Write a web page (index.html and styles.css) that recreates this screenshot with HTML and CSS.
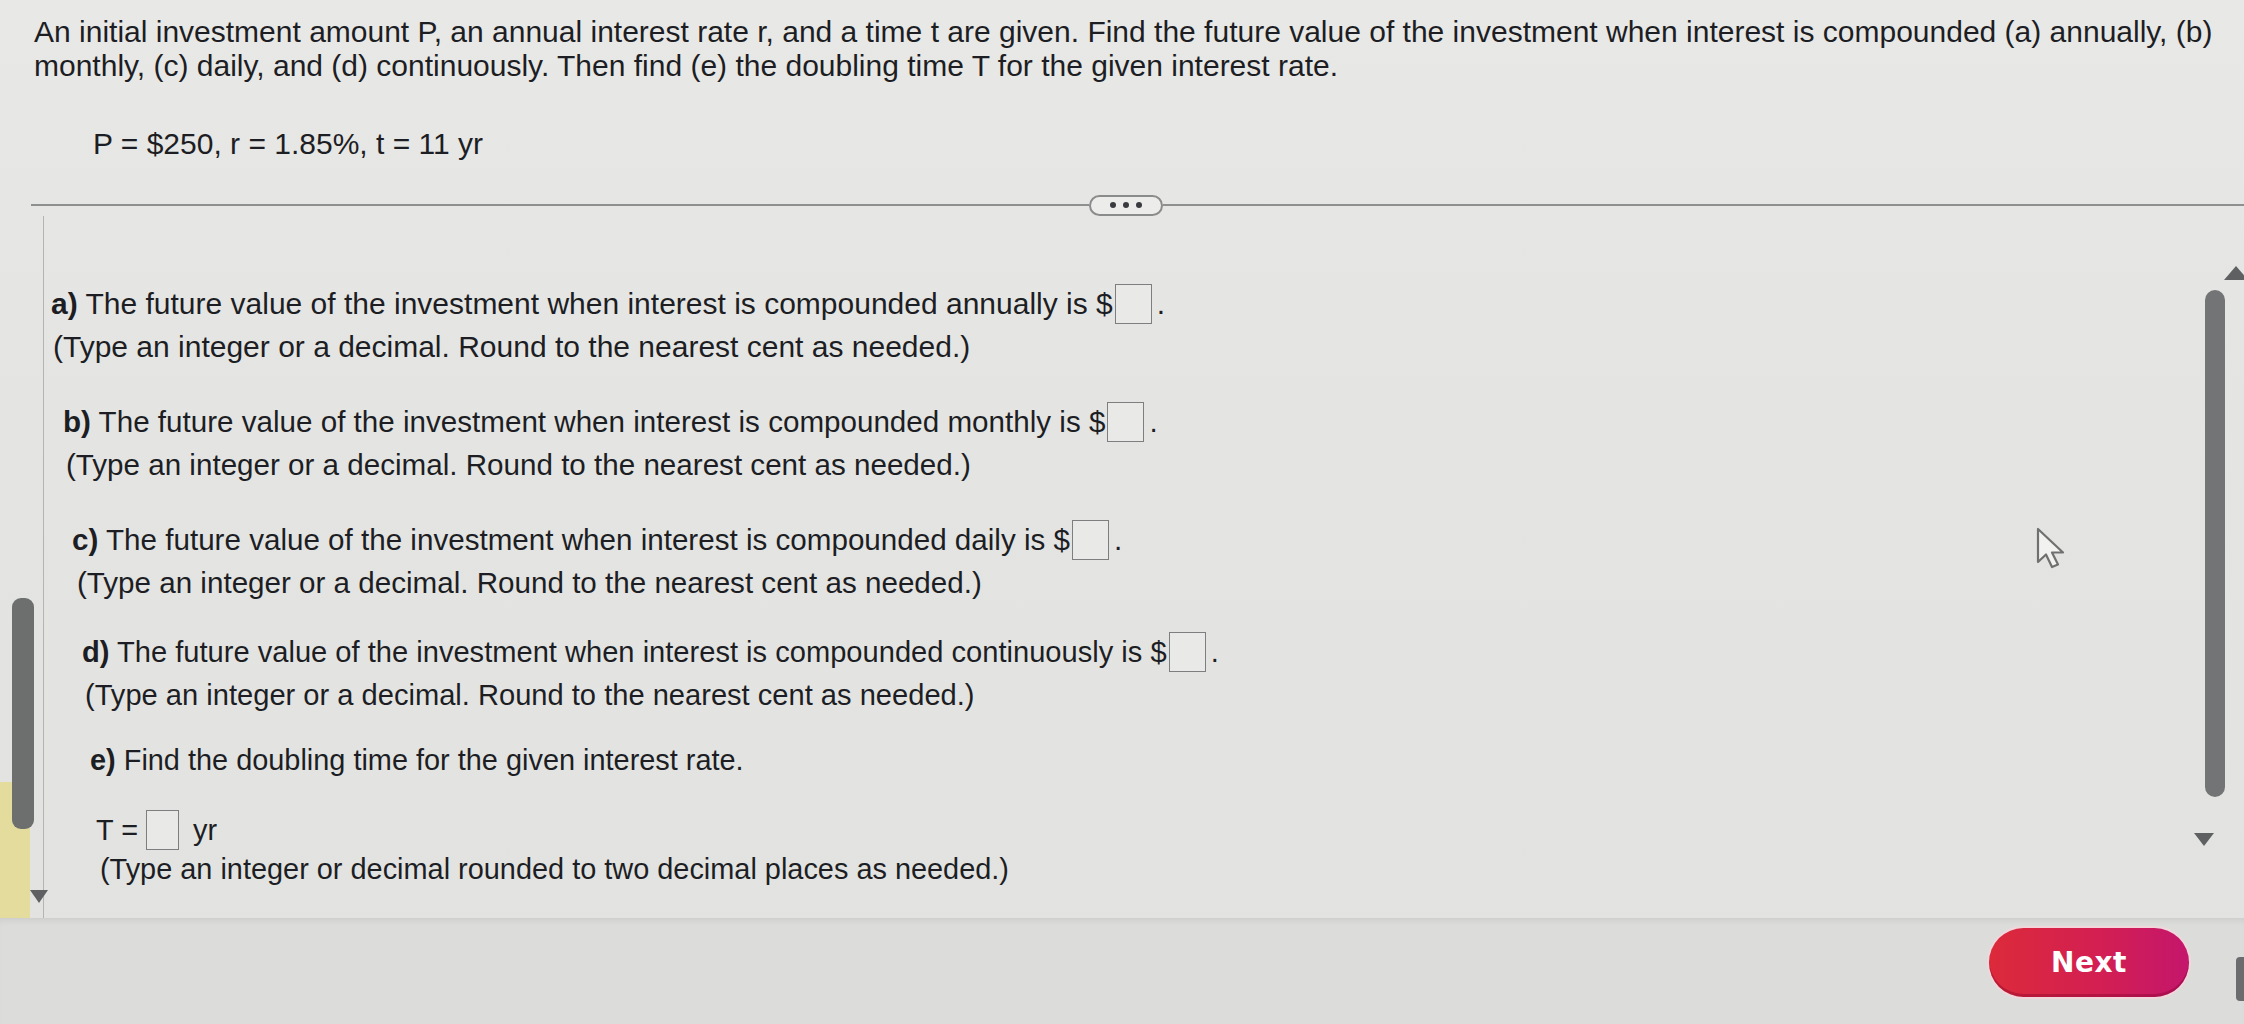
FILE: index.html
```html
<!DOCTYPE html>
<html lang="en">
<head>
<meta charset="utf-8">
<title>Compound interest</title>
<link rel="stylesheet" href="styles.css">
</head>
<body>
<div class="page">
  <header class="prompt">
    <p class="intro">An initial investment amount P, an annual interest rate r, and a time t are given. Find the future value of the investment when interest is compounded (a) annually, (b)<br>monthly, (c) daily, and (d) continuously. Then find (e) the doubling time T for the given interest rate.</p>
    <p class="given">P = $250, r = 1.85%, t = 11 yr</p>
  </header>

  <div class="divider">
    <span class="rule rule-left"></span>
    <button class="more" type="button" aria-label="More"><span class="dot"></span><span class="dot"></span><span class="dot"></span></button>
    <span class="rule rule-right"></span>
  </div>

  <div class="workarea">
    <aside class="side-pane">
      <span class="side-thumb"></span>
      <span class="side-note"></span>
      <span class="side-arrow"></span>
    </aside>

    <section class="questions">
      <div class="q q-a">
        <p class="line"><b>a)</b> The future value of the investment when interest is compounded annually is $<span class="answer"></span><span class="period">.</span></p>
        <p class="line hint hint-a">(Type an integer or a decimal. Round to the nearest cent as needed.)</p>
      </div>
      <div class="q q-b">
        <p class="line"><b>b)</b> The future value of the investment when interest is compounded monthly is $<span class="answer"></span><span class="period">.</span></p>
        <p class="line hint">(Type an integer or a decimal. Round to the nearest cent as needed.)</p>
      </div>
      <div class="q q-c">
        <p class="line"><b>c)</b> The future value of the investment when interest is compounded daily is $<span class="answer"></span><span class="period">.</span></p>
        <p class="line hint hint-c">(Type an integer or a decimal. Round to the nearest cent as needed.)</p>
      </div>
      <div class="q q-d">
        <p class="line"><b>d)</b> The future value of the investment when interest is compounded continuously is $<span class="answer"></span><span class="period">.</span></p>
        <p class="line hint">(Type an integer or a decimal. Round to the nearest cent as needed.)</p>
      </div>
      <div class="q q-e">
        <p class="line"><b>e)</b> Find the doubling time for the given interest rate.</p>
        <p class="line t-row">T =<span class="answer answer-t"></span><span class="unit">yr</span></p>
        <p class="line t-hint">(Type an integer or decimal rounded to two decimal places as needed.)</p>
      </div>
    </section>

    <div class="vscroll">
      <span class="arrow-up"></span>
      <span class="vthumb"></span>
      <span class="arrow-down"></span>
    </div>
  </div>

  <footer class="footer">
    <button class="next" type="button">Next</button>
    <span class="edge-bar"></span>
  </footer>

  <svg class="cursor" width="34" height="44" viewBox="0 0 34 44" aria-hidden="true">
    <path d="M2 2 L2 35 L10 27.5 L16 40 L22 37.5 L16 25.5 L27 25.5 Z" fill="#f2f2f0" stroke="#6f7170" stroke-width="2.2" stroke-linejoin="round"/>
  </svg>
</div>
</body>
</html>
```

FILE: styles.css
```css
* { box-sizing: border-box; }

body {
  margin: 0;
  background: #e4e5e3;
  font-family: "Liberation Sans", Arial, sans-serif;
  color: #1d1e24;
}

.page {
  position: relative;
  width: 2244px;
  height: 1024px;
  display: flex;
  flex-direction: column;
  overflow: hidden;
  background: linear-gradient(180deg, #e8e8e6 0%, #e4e5e3 40%, #e2e3e1 100%);
}

/* ---------- prompt ---------- */
.prompt {
  padding: 15px 0 0 34px;
  font-size: 30px;
}

.intro {
  margin: 0;
  line-height: 34px;
  white-space: nowrap;
}

.given {
  margin: 44px 0 0 59px;
  line-height: 34px;
}

/* ---------- divider ---------- */
.divider {
  margin-top: 33px;
  height: 22px;
  display: flex;
  align-items: center;
  padding-left: 31px;
}

.rule {
  height: 2px;
  background: #8e908f;
}

.rule-left { width: 1058px; flex: none; }
.rule-right { flex: 1; }

.more {
  flex: none;
  width: 74px;
  height: 21px;
  padding: 0;
  border: 2px solid #8a8c8b;
  border-radius: 11px;
  background: #ecedeb;
  display: flex;
  align-items: center;
  justify-content: center;
  gap: 7px;
}

.dot {
  width: 6px;
  height: 6px;
  border-radius: 50%;
  background: #3a3b3f;
}

/* ---------- work area ---------- */
.workarea {
  flex: none;
  height: 702px;
  display: flex;
}

.side-pane {
  flex: none;
  width: 44px;
  border-right: 1px solid #b3b5b3;
  display: grid;
  grid-template-columns: 12px 14px 4px 4px 8px 1fr;
  grid-template-rows: 382px 184px 47px 59px 16px 1fr;
}

.side-thumb {
  grid-column: 2 / 5;
  grid-row: 2 / 4;
  border-radius: 9px;
  background: #6d6e6e;
  z-index: 1;
}

.side-note {
  grid-column: 1 / 4;
  grid-row: 3 / 7;
  background: #e3dc9c;
}

.side-arrow {
  grid-column: 4 / 7;
  grid-row: 5 / 6;
  justify-self: center;
  align-self: center;
  width: 0;
  height: 0;
  border-left: 9px solid transparent;
  border-right: 9px solid transparent;
  border-top: 13px solid #5f6061;
}

.questions {
  flex: 1;
  padding-top: 66px;
  font-size: 30px;
}

.line {
  margin: 0;
  line-height: 43px;
  white-space: nowrap;
}

.line b { font-weight: 700; }

.q + .q { margin-top: 32px; }
.q-c { margin-top: 31px; }
.q.q-d { margin-top: 27px; }
.q.q-e { margin-top: 22px; }

.q-a { padding-left: 7px; }
.q-b { padding-left: 19px; font-size: 29.6px; }
.q-c { padding-left: 28px; font-size: 29.6px; }
.q-d { padding-left: 38px; font-size: 29.1px; }
.q-e { padding-left: 46px; font-size: 28.9px; }

.hint { padding-left: 3px; }
.hint-a { padding-left: 2px; }
.hint-c { padding-left: 5px; }

.answer {
  display: inline-block;
  width: 37px;
  height: 40px;
  margin-left: 2px;
  vertical-align: -10px;
  border: 1.5px solid #7c7e7f;
  background: #e9eae8;
}

.period { margin-left: 5px; }

.t-row {
  margin-top: 27px;
  padding-left: 6px;
}

.answer-t {
  width: 33px;
  margin-left: 8px;
}

.unit { margin-left: 14px; }

.t-hint {
  padding-left: 10px;
  line-height: 34px;
}

/* right scrollbar */
.vscroll {
  flex: none;
  width: 64px;
  display: flex;
  flex-direction: column;
  align-items: flex-start;
  padding-top: 50px;
}

.arrow-up {
  margin-left: 44px;
  width: 0;
  height: 0;
  border-left: 12px solid transparent;
  border-right: 12px solid transparent;
  border-bottom: 14px solid #5e6062;
}

.vthumb {
  margin-top: 10px;
  margin-left: 25px;
  width: 20px;
  height: 507px;
  border-radius: 10px;
  background: #727476;
}

.arrow-down {
  margin-top: 36px;
  margin-left: 14px;
  width: 0;
  height: 0;
  border-left: 10px solid transparent;
  border-right: 10px solid transparent;
  border-top: 13px solid #5e6062;
}

/* ---------- footer ---------- */
.footer {
  flex: 1;
  display: flex;
  justify-content: flex-end;
  align-items: flex-start;
  padding-top: 10px;
  background: #dcdddb;
  box-shadow: inset 0 6px 8px -6px rgba(0, 0, 0, 0.12);
}

.next {
  width: 200px;
  height: 69px;
  border: none;
  border-radius: 35px;
  background: linear-gradient(90deg, #dc2a3a 0%, #d31f52 55%, #c4166c 100%);
  box-shadow: 0 0 0 2px #f1d7dc, inset 0 -3px 0 rgba(120, 0, 40, 0.35);
  color: #ffffff;
  font-family: "DejaVu Sans", Verdana, sans-serif;
  font-weight: 700;
  font-size: 28px;
  letter-spacing: 0.5px;
}

.edge-bar {
  margin-left: 47px;
  margin-top: 29px;
  width: 8px;
  height: 44px;
  border-radius: 4px 0 0 4px;
  background: #6a6c6e;
}

/* ---------- cursor overlay ---------- */
.cursor {
  position: absolute;
  left: 2036px;
  top: 527px;
}
```
